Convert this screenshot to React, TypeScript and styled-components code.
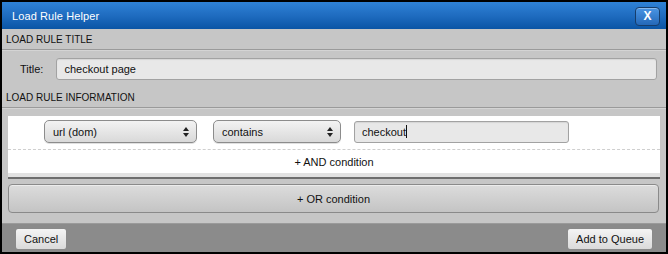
import styled, { createGlobalStyle } from "styled-components";

const GlobalStyle = createGlobalStyle`
  html, body {
    margin: 0;
    padding: 0;
    background: #000;
  }
  * {
    box-sizing: border-box;
  }
  body {
    font-family: "Liberation Sans", Arial, Helvetica, sans-serif;
    color: #111;
  }
`;

const Dialog = styled.div`
  width: 668px;
  height: 254px;
  border: 2px solid #000;
  background: #c6c6c6;
  display: flex;
  flex-direction: column;
`;

const TitleBar = styled.div`
  height: 27px;
  flex: none;
  display: flex;
  align-items: center;
  justify-content: space-between;
  padding: 0 6px 0 10px;
  background: linear-gradient(to bottom, #2f82d6 0%, #1f6cc0 50%, #0b55a5 100%);
  color: #fff;
  font-size: 11px;
  letter-spacing: 0.1px;
`;

const CloseButton = styled.button`
  width: 25px;
  height: 19px;
  margin-top: 2px;
  padding: 0;
  border: 1px solid #163d6b;
  border-radius: 4px;
  background: linear-gradient(to bottom, #4a95e4, #2468b8);
  box-shadow: inset 0 1px 0 rgba(255, 255, 255, 0.35);
  color: #fff;
  font-family: "Liberation Sans", Arial, sans-serif;
  font-weight: bold;
  font-size: 12px;
  line-height: 17px;
`;

const SectionHeader = styled.div`
  height: 21px;
  flex: none;
  display: flex;
  align-items: center;
  padding: 1px 0 0 4px;
  font-size: 10px;
  color: #111;
  border-bottom: 1px solid #9a9a9a;
  box-shadow: 0 1px 0 #d4d4d4;
`;

const TitleRow = styled.div`
  height: 37px;
  flex: none;
  display: flex;
  align-items: center;
  padding: 0 9px 0 18px;
  gap: 13px;
  font-size: 11px;
`;

const TextBox = styled.div<{ $width?: number }>`
  height: 22px;
  flex: ${(p) => (p.$width ? "none" : "1")};
  width: ${(p) => (p.$width ? `${p.$width}px` : "auto")};
  display: flex;
  align-items: center;
  padding: 0 7px;
  background: #e8e8e8;
  border: 1px solid #a2a2a2;
  border-radius: 3px;
  box-shadow: inset 0 1px 1px rgba(0, 0, 0, 0.08);
  font-size: 11px;
  color: #111;
`;

const Caret = styled.span`
  display: inline-block;
  width: 1px;
  height: 13px;
  background: #111;
`;

const Body = styled.div`
  flex: 1;
  display: flex;
  flex-direction: column;
  padding: 8px 6px 0 6px;
  gap: 7px;
`;

const Panel = styled.div`
  background: #fff;
  border-bottom: 4px solid #e2e2e2;
  box-shadow: 0 2px 0 #6e6e6e;
`;

const ConditionRow = styled.div`
  display: flex;
  align-items: center;
  padding: 4px 0 6px 36px;
  border-bottom: 1px dashed #cfcfcf;
`;

const Select = styled.div<{ $width: number }>`
  width: ${(p) => p.$width}px;
  height: 23px;
  margin-right: ${(p) => (p.$width > 140 ? 16 : 13)}px;
  display: flex;
  align-items: center;
  justify-content: space-between;
  padding: 0 7px 0 8px;
  border: 1px solid #8c8c8c;
  border-radius: 5px;
  background: linear-gradient(to bottom, #f3f3f3, #d9d9d9);
  box-shadow: 0 1px 0 rgba(0, 0, 0, 0.12);
  font-size: 11px;
`;

const AndLink = styled.div`
  height: 23px;
  display: flex;
  align-items: center;
  justify-content: center;
  font-size: 11px;
  color: #111;
`;

const OrButton = styled.div`
  height: 29px;
  margin-right: 1px;
  display: flex;
  align-items: center;
  justify-content: center;
  border: 1px solid #8a8a8a;
  border-radius: 4px;
  background: linear-gradient(to bottom, #dcdcdc, #c4c4c4);
  box-shadow: inset 0 1px 0 #ececec;
  font-size: 11px;
`;

const Footer = styled.div`
  height: 29px;
  flex: none;
  display: flex;
  align-items: center;
  justify-content: space-between;
  padding: 0 13px 0 13px;
  background: #8b8b8b;
  border-top: 1px solid #9a9a9a;
`;

const FooterButton = styled.button`
  height: 22px;
  padding: 0 8px;
  margin-top: 2px;
  border: 1px solid #8a8a8a;
  border-radius: 3px;
  background: linear-gradient(to bottom, #f4f4f4, #dadada);
  font-family: "Liberation Sans", Arial, sans-serif;
  font-size: 11px;
  color: #111;
`;

const SelectArrows = () => (
  <svg width="6" height="10" viewBox="0 0 6 10">
    <path d="M3 0 L6 4 L0 4 Z" fill="#222" />
    <path d="M0 6 L6 6 L3 10 Z" fill="#222" />
  </svg>
);

const App = () => {
  return (
    <>
      <GlobalStyle />
      <Dialog>
        <TitleBar>
          <span>Load Rule Helper</span>
          <CloseButton>X</CloseButton>
        </TitleBar>
        <SectionHeader>LOAD RULE TITLE</SectionHeader>
        <TitleRow>
          <span>Title:</span>
          <TextBox>checkout page</TextBox>
        </TitleRow>
        <SectionHeader>LOAD RULE INFORMATION</SectionHeader>
        <Body>
          <Panel>
            <ConditionRow>
              <Select $width={153}>
                <span>url (dom)</span>
                <SelectArrows />
              </Select>
              <Select $width={128}>
                <span>contains</span>
                <SelectArrows />
              </Select>
              <TextBox $width={215}>
                checkout
                <Caret />
              </TextBox>
            </ConditionRow>
            <AndLink>+ AND condition</AndLink>
          </Panel>
          <OrButton>+ OR condition</OrButton>
        </Body>
        <Footer>
          <FooterButton>Cancel</FooterButton>
          <FooterButton>Add to Queue</FooterButton>
        </Footer>
      </Dialog>
    </>
  );
};

export default App;
